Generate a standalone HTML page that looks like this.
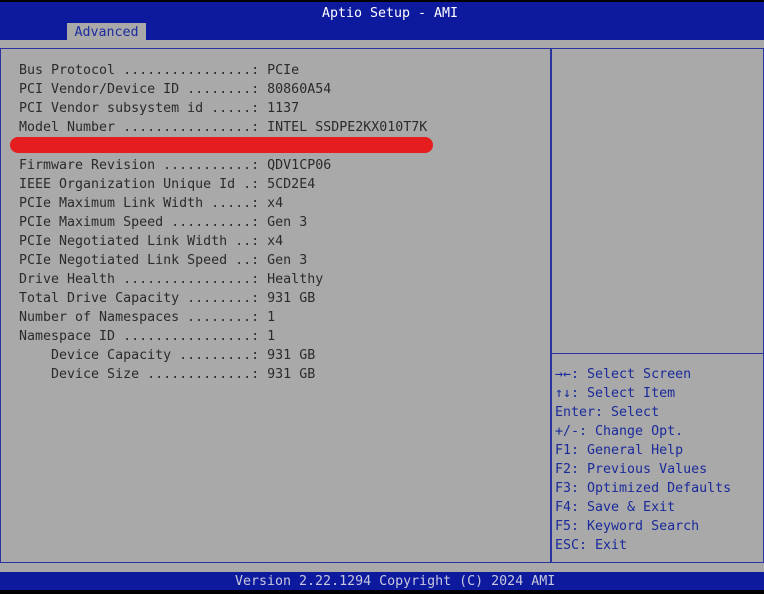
<!DOCTYPE html>
<html><head><style>
html,body{margin:0;padding:0;}
body{width:764px;height:594px;position:relative;background:#a9a9a9;overflow:hidden;font-family:"DejaVu Sans Mono","Liberation Mono",monospace;font-size:13.3px;}
.abs{position:absolute;white-space:pre;}
#top{position:absolute;left:0;top:0;width:764px;height:40px;background:#0d1a9e;border-top:2px solid #000;box-sizing:border-box;}
#title{position:absolute;left:8px;width:764px;top:4px;text-align:center;color:#fff;}
#tab{position:absolute;left:67px;top:21px;width:79px;height:19px;background:#a9a9a9;color:#1c2aa0;text-align:center;line-height:20px;}
.hl{position:absolute;background:#2a33a0;}
.t{color:#2b2b2b;}
.b{color:#1a2a9a;}
#bot{position:absolute;left:0;top:572px;width:764px;height:18px;background:#0d1a9e;color:#c8c8dc;line-height:19px;}
#blk{position:absolute;left:0;top:590px;width:764px;height:4px;background:#000;}
#red{position:absolute;left:10px;top:137px;width:423px;height:16px;background:#e51d1f;border-radius:8px;}
</style></head><body>
<div id="top"><div id="title">Aptio Setup - AMI</div><div id="tab">Advanced</div></div>
<div class="hl" style="left:0;top:48px;width:764px;height:1px"></div>
<div class="hl" style="left:550px;top:48px;width:2px;height:515px"></div>
<div class="hl" style="left:552px;top:353px;width:212px;height:1px"></div>
<div class="hl" style="left:0;top:562px;width:764px;height:1px"></div>
<div class="hl" style="left:0;top:48px;width:1px;height:515px"></div>
<div class="hl" style="left:763px;top:48px;width:1px;height:515px"></div>
<div id="red"></div>
<div class="abs t" style="left:19px;top:61px;line-height:19px">Bus Protocol ................: PCIe
PCI Vendor/Device ID ........: 80860A54
PCI Vendor subsystem id .....: 1137
Model Number ................: INTEL SSDPE2KX010T7K

Firmware Revision ...........: QDV1CP06
IEEE Organization Unique Id .: 5CD2E4
PCIe Maximum Link Width .....: x4
PCIe Maximum Speed ..........: Gen 3
PCIe Negotiated Link Width ..: x4
PCIe Negotiated Link Speed ..: Gen 3
Drive Health ................: Healthy
Total Drive Capacity ........: 931 GB
Number of Namespaces ........: 1
Namespace ID ................: 1
    Device Capacity .........: 931 GB
    Device Size .............: 931 GB</div>
<div class="abs b" style="left:555px;top:365px;line-height:19px">→←: Select Screen
↑↓: Select Item
Enter: Select
+/-: Change Opt.
F1: General Help
F2: Previous Values
F3: Optimized Defaults
F4: Save &amp; Exit
F5: Keyword Search
ESC: Exit</div>
<div id="bot"><span class="abs" style="left:235px;top:0">Version 2.22.1294 Copyright (C) 2024 AMI</span></div>
<div id="blk"></div>
</body></html>
